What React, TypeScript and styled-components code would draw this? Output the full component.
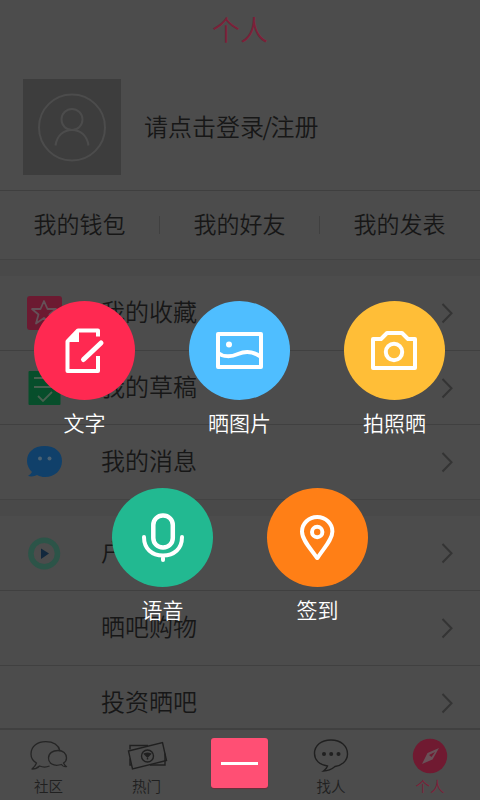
import React from "react";
import styled, { createGlobalStyle } from "styled-components";

const Global = createGlobalStyle`
  * { box-sizing: border-box; }
  html, body { margin: 0; padding: 0; background: #4c4c4c; }
  body { font-family: "Noto Sans CJK SC", sans-serif; font-weight: 350; }
  svg { display: block; overflow: visible; }
`;

const Screen = styled.div`
  position: relative;
  width: 480px;
  height: 800px;
  overflow: hidden;
  display: flex;
  flex-direction: column;
  background: #4c4c4c;
  color: #171717;
`;

const Title = styled.header`
  height: 62px;
  line-height: 58px;
  text-align: center;
  font-size: 28px;
  color: #7c2038;
  flex: none;
`;

const Profile = styled.section`
  height: 129px;
  flex: none;
  display: flex;
  align-items: center;
  gap: 23px;
  padding: 2px 0 0 23px;
  border-bottom: 1px solid #3f3f3f;
`;

const Avatar = styled.div`
  width: 98px;
  height: 96px;
  background: #3d3d3d;
`;

const LoginText = styled.div`
  font-size: 24px;
  line-height: 30px;
  padding-bottom: 3px;
  white-space: nowrap;
`;

const Slash = styled.span`
  margin: 0 -1.5px;
`;

const Tabs = styled.nav`
  height: 68px;
  flex: none;
  display: grid;
  grid-template-columns: repeat(3, 160px);
  align-items: center;
`;

const Tab = styled.div<{ $divided?: boolean }>`
  height: 18px;
  font-size: 23px;
  line-height: 15px;
  text-align: center;
  border-right: 1px solid ${(p) => (p.$divided ? "#404040" : "transparent")};
`;

const Gap = styled.div<{ $h: number }>`
  height: ${(p) => p.$h}px;
  flex: none;
  background: #494949;
  border-top: 1px solid #434343;
`;

const Row = styled.div<{ $h: number; $last?: boolean }>`
  height: ${(p) => p.$h}px;
  flex: none;
  display: grid;
  grid-template-columns: 101px 1fr 39px;
  align-items: start;
  border-bottom: ${(p) => (p.$last ? 0 : 1)}px solid #404040;
`;

const RowIcon = styled.div`
  padding: 19px 0 0 26px;
`;

const RowText = styled.div`
  font-size: 24px;
  line-height: 69px;
`;

const RowArrow = styled.div`
  padding-top: 26px;
`;

const BottomBar = styled.footer`
  height: 72px;
  flex: none;
  display: grid;
  grid-template-columns: 97px 99px 86px 98px 100px;
  border-top: 2px solid #404040;
`;

const NavItem = styled.div<{ $active?: boolean }>`
  display: flex;
  flex-direction: column;
  align-items: center;
  padding-top: 8px;
  font-size: 14.500px;
  line-height: 20px;
  color: ${(p) => (p.$active ? "#7c2038" : "#202020")};
  svg { margin-bottom: 4px; }
`;

const CloseButton = styled.div`
  width: 57px;
  height: 50px;
  margin: 8px 0 0 15px;
  border-radius: 3px;
  background: #ff4f74;
  box-shadow: 0 1px 1px #6d2d3b;
  display: flex;
  align-items: center;
  justify-content: center;
`;

const CloseBar = styled.div`
  width: 37px;
  height: 3px;
  background: #fff;
`;

const Overlay = styled.div`
  position: absolute;
  inset: 0;
  padding-top: 301px;
  display: flex;
  flex-direction: column;
  gap: 48px;
`;

const ActionLine = styled.div<{ $indent: number }>`
  display: flex;
  gap: 54px;
  height: 139px;
  padding-left: ${(p) => p.$indent}px;
`;

const Action = styled.div`
  width: 101px;
  display: flex;
  flex-direction: column;
  align-items: center;
  color: #fff;
  font-size: 21px;
  line-height: 30px;
  white-space: nowrap;
`;

const Disc = styled.div<{ $color: string }>`
  width: 101px;
  height: 99px;
  margin-bottom: 7px;
  border-radius: 50%;
  background: ${(p) => p.$color};
`;

const Glyph = ({ children }: { children: React.ReactNode }) => (
  <svg width="101" height="99" viewBox="0 0 101 99" fill="none" stroke="#fff" strokeWidth="4" strokeLinejoin="round">
    {children}
  </svg>
);

const actionLines = [
  {
    indent: 34,
    items: [
      {
        label: "文字",
        color: "#ff2951",
        icon: (
          <>
            <path d="M64 35.500V29.500H44L33.500 40.500V70H64V55" />
            <path d="M45 29V41H33Z" fill="#fff" stroke="none" />
            <path d="M49.500 58.500L67 42" strokeWidth="5" strokeLinecap="round" />
          </>
        ),
      },
      {
        label: "晒图片",
        color: "#4fbeff",
        icon: (
          <>
            <rect x="29" y="33" width="43" height="33" />
            <path d="M29 52C34 56 42 56 49 53C56 50 64 50 72 56" />
            <circle cx="40" cy="43.500" r="3" fill="#fff" stroke="none" />
          </>
        ),
      },
      {
        label: "拍照晒",
        color: "#ffbe37",
        icon: (
          <>
            <path d="M29 38H37L43 32H58L64 38H71V67H29Z" />
            <circle cx="50" cy="51" r="8.200" />
          </>
        ),
      },
    ],
  },
  {
    indent: 112,
    items: [
      {
        label: "语音",
        color: "#22b991",
        icon: (
          <>
            <rect x="41.300" y="27.500" width="19.500" height="32" rx="9.500" strokeWidth="4.500" />
            <path d="M32 49C32 61 40 67.500 51 67.500C62 67.500 70 61 70 49M51 68V72" strokeLinecap="round" />
          </>
        ),
      },
      {
        label: "签到",
        color: "#ff7f16",
        icon: (
          <>
            <path d="M50 70C44 61 35 52 35 43.500A15.200 14.500 0 0 1 65.400 43.500C65.400 52 56 61 50.500 70Z" />
            <circle cx="50.200" cy="44" r="5.200" />
          </>
        ),
      },
    ],
  },
];

const StarIcon = () => (
  <svg width="36" height="36">
    <rect x="1" y="1" width="35" height="34" rx="3" fill="#6c1a31" />
    <path d="M18 6L21.500 14H30L23.500 19.500L26 28.500L18 23L10 28.500L12.500 19.500L6 14H14.500Z" fill="none" stroke="#655158" strokeWidth="1.800" strokeLinejoin="round" />
  </svg>
);

const DraftIcon = () => (
  <svg width="36" height="36">
    <rect x="2.500" y="1" width="32" height="34" rx="1" fill="#074e2b" />
    <path d="M8 8H29M8 17H29M12 26L17 31L26 22" fill="none" stroke="#48604f" strokeWidth="1.800" />
  </svg>
);

const MessageIcon = () => (
  <svg width="36" height="36">
    <path d="M18.500 2C8 2 1 8 1 17C1 21.500 3 25 6 28Q5 30 2 32C6 33 9 32 11 31C14 32.500 16 33 19 33C29 33 36 26 36 17S29 2 18.500 2Z" fill="#10406a" />
    <circle cx="14" cy="14.500" r="2" fill="#4b6172" />
    <circle cx="23.500" cy="14.500" r="2" fill="#4b6172" />
  </svg>
);

const PlayIcon = () => (
  <svg width="36" height="36">
    <circle cx="18.200" cy="18.500" r="13.300" fill="none" stroke="#2c5448" strokeWidth="5.500" />
    <path d="M15 13.500L23 18.500L15 24Z" fill="#12283d" />
  </svg>
);

const Chevron = () => (
  <svg width="14" height="22" fill="none" stroke="#343434" strokeWidth="2">
    <path d="M1.500 2L10.500 11.200L1.500 20.500" />
  </svg>
);

const CommunityIcon = () => (
  <svg width="38" height="34" viewBox="0 -3 38 34" fill="none" stroke="#252525" strokeWidth="1.300" strokeLinejoin="round">
    <path d="M19.500 25C16 26.500 12 26 9.500 25C7.500 27 5 28 2 28Q5.500 25 6.500 22C3 20 1 16.500 1 13C1 5 8 0.700 15.500 0.700C23 0.700 28.500 4 30 10" />
    <path d="M31.500 23.500C23 26 18.500 22 18.500 17S23 9.500 28 9.500S36.500 12.500 36.500 17C36.500 19 35.500 21 33.500 22Q35 25 36.500 25.500C34.500 26 32.500 25 31.500 23.500Z" />
  </svg>
);

const HotIcon = () => (
  <svg width="40" height="34" viewBox="0 -2.500 40 34" fill="none" stroke="#202020" strokeWidth="1.400">
    <path d="M1.500 10.500L35.500 2L39.500 20L5.500 28.500Z" />
    <path d="M3 9V5H21M3 18V24.500H5M38 13V24.500H23" />
    <circle cx="20.500" cy="15.500" r="6" />
    <path d="M17.500 13.500Q20.500 12 23.500 13.500L20.500 16.500ZM20.500 16V19" fill="#202020" />
  </svg>
);

const FindIcon = () => (
  <svg width="36" height="34" viewBox="0 0.500 36 34" fill="none" stroke="#202020" strokeWidth="1.400">
    <path d="M14.500 28.500C6 27.500 1.500 22 1.500 16C1.500 8 8 2.500 18 2.500S34.500 8.500 34.500 16.500C34.500 24 28 28 22 29C19 31.500 15 33.500 10.500 33.500Q13.500 31.500 14.500 28.500Z" />
    <g fill="#202020" stroke="none">
      <circle cx="11" cy="16.500" r="2" /><circle cx="18.200" cy="16.500" r="2" /><circle cx="25.500" cy="16.500" r="2" />
    </g>
  </svg>
);

const CompassIcon = () => (
  <svg width="36" height="34">
    <circle cx="18" cy="18" r="17.200" fill="#701a31" />
    <path d="M27 10L20.500 21.500L10 26L15.500 15Z" fill="#695158" />
    <path d="M23 14L19.500 19L17 17Z" fill="#701a31" />
  </svg>
);

export default function App() {
  return (
    <>
      <Global />
      <Screen>
        <Title>个人</Title>
        <Profile>
          <Avatar>
            <svg width="98" height="96" fill="none" stroke="#4c4c4c" strokeWidth="2">
              <circle cx="49" cy="48.500" r="33" />
              <circle cx="49" cy="40.500" r="10.500" />
              <path d="M32.500 66.500C34 56 41 51 49 51S64 56 65.500 66.500" />
            </svg>
          </Avatar>
          <LoginText>请点击登录<Slash>/</Slash>注册</LoginText>
        </Profile>
        <Tabs>
          <Tab $divided>我的钱包</Tab>
          <Tab $divided>我的好友</Tab>
          <Tab>我的发表</Tab>
        </Tabs>
        <Gap $h={17} />
        <Row $h={75}><RowIcon><StarIcon /></RowIcon><RowText>我的收藏</RowText><RowArrow><Chevron /></RowArrow></Row>
        <Row $h={74}><RowIcon><DraftIcon /></RowIcon><RowText>我的草稿</RowText><RowArrow><Chevron /></RowArrow></Row>
        <Row $h={74} $last><RowIcon><MessageIcon /></RowIcon><RowText>我的消息</RowText><RowArrow><Chevron /></RowArrow></Row>
        <Gap $h={17} />
        <Row $h={75}><RowIcon><PlayIcon /></RowIcon><RowText>户</RowText><RowArrow><Chevron /></RowArrow></Row>
        <Row $h={75}><span /><RowText>晒吧购物</RowText><RowArrow><Chevron /></RowArrow></Row>
        <Row $h={62} $last><span /><RowText>投资晒吧</RowText><RowArrow><Chevron /></RowArrow></Row>
        <BottomBar>
          <NavItem><CommunityIcon />社区</NavItem>
          <NavItem><HotIcon />热门</NavItem>
          <CloseButton><CloseBar /></CloseButton>
          <NavItem><FindIcon />找人</NavItem>
          <NavItem $active><CompassIcon />个人</NavItem>
        </BottomBar>
        <Overlay>
          {actionLines.map((line) => (
            <ActionLine key={line.indent} $indent={line.indent}>
              {line.items.map((item) => (
                <Action key={item.label}>
                  <Disc $color={item.color}><Glyph>{item.icon}</Glyph></Disc>
                  {item.label}
                </Action>
              ))}
            </ActionLine>
          ))}
        </Overlay>
      </Screen>
    </>
  );
}
